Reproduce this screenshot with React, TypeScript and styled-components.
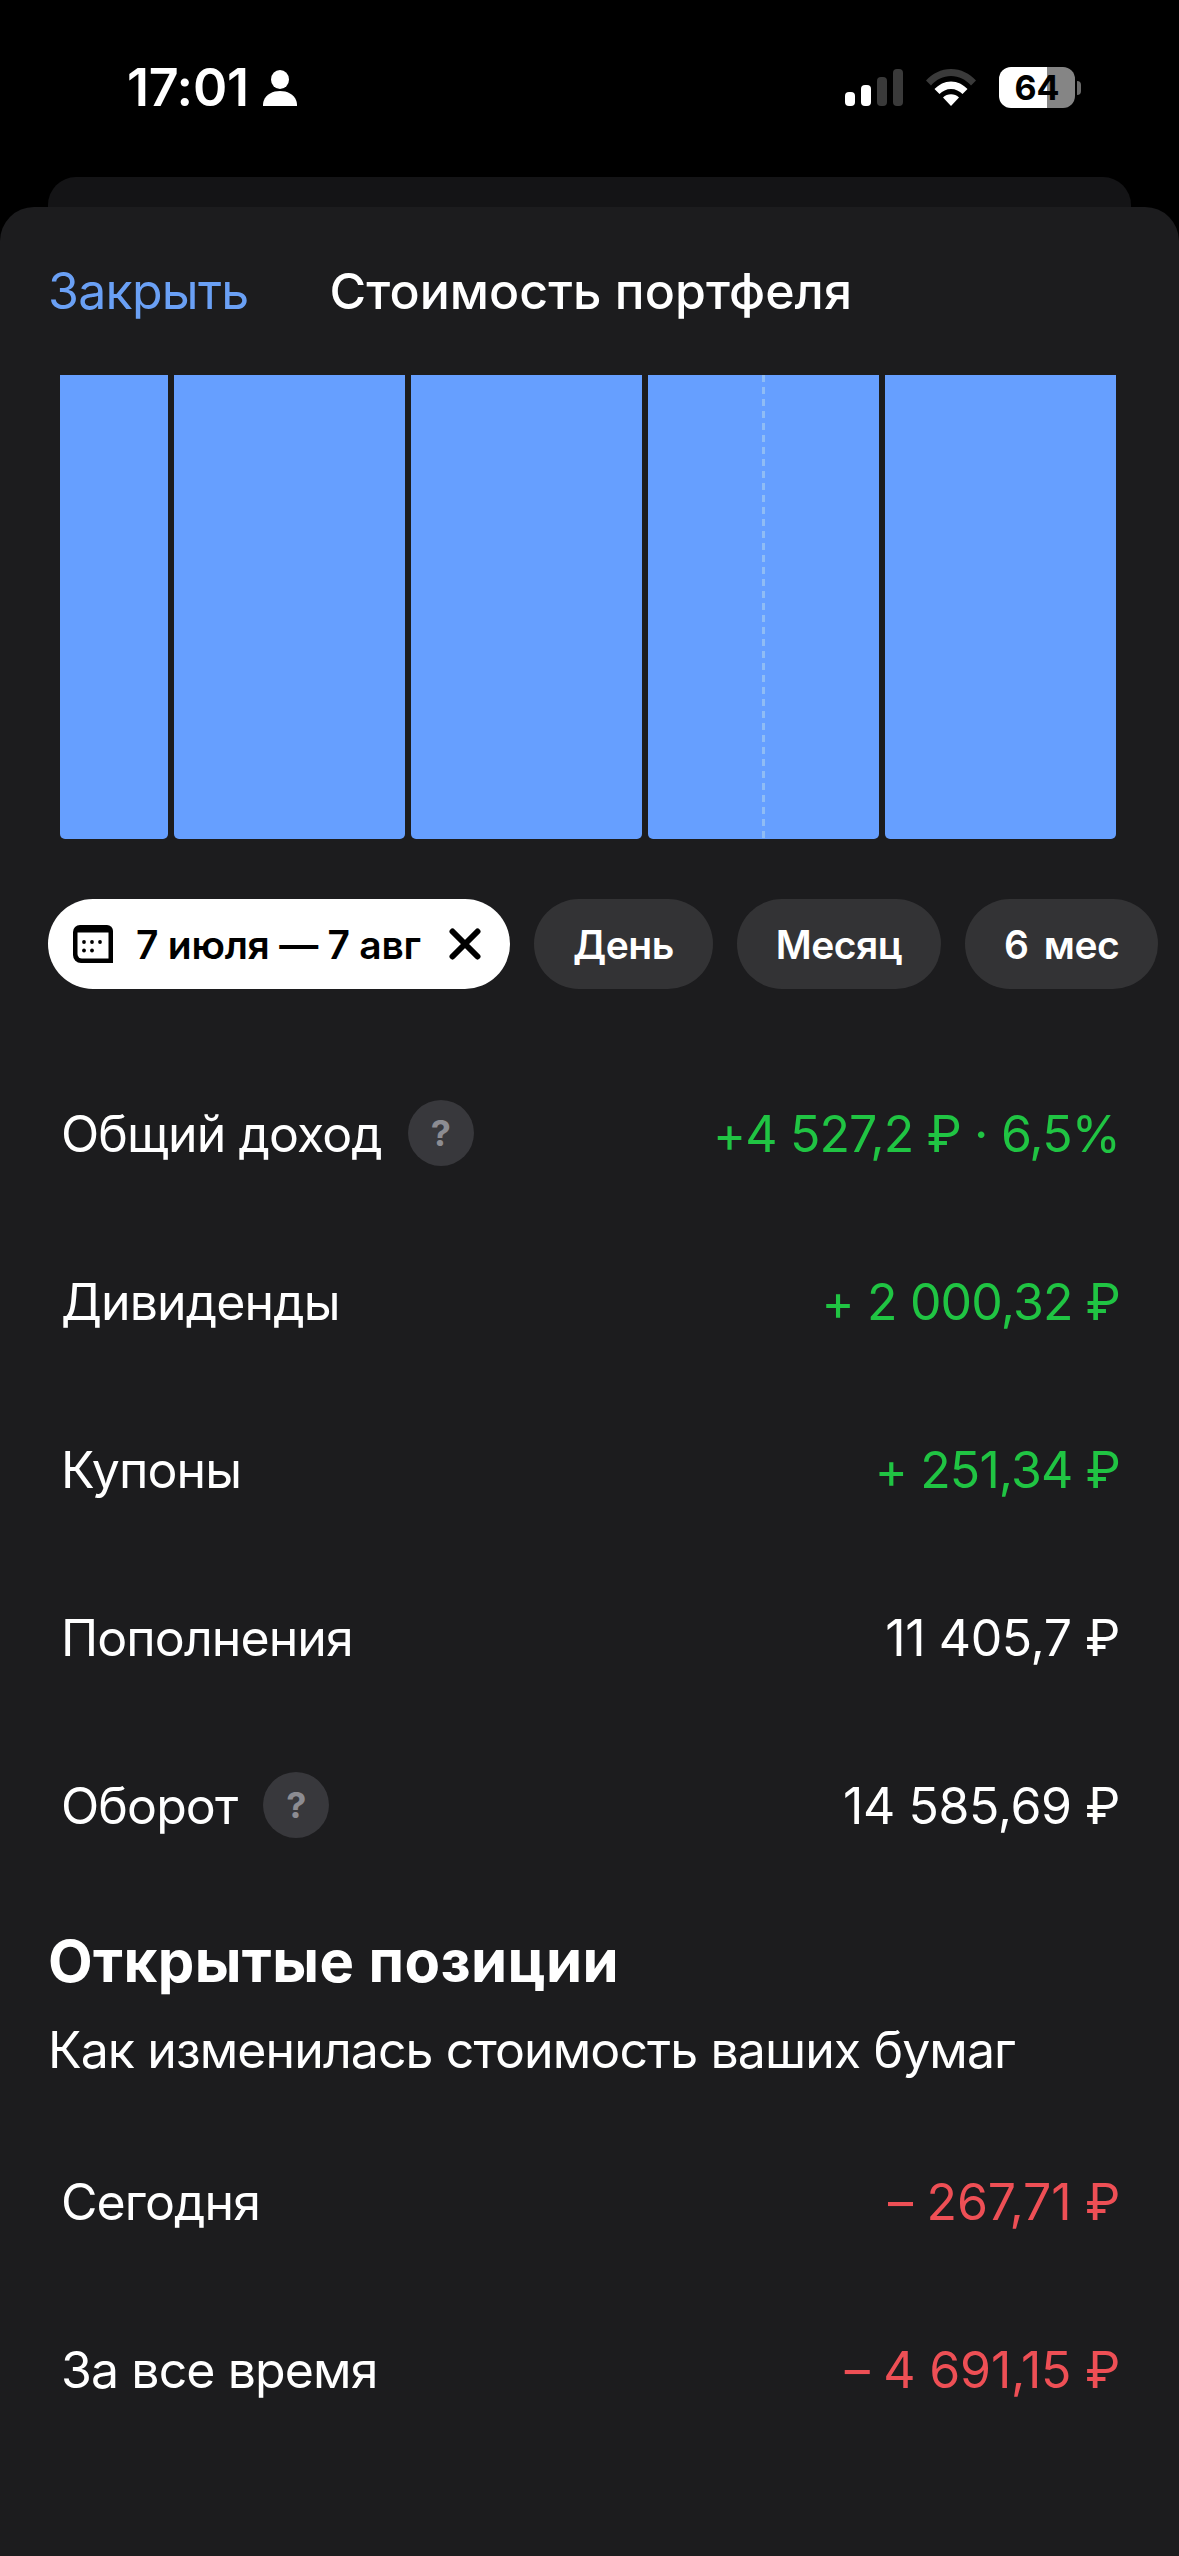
import styled, { createGlobalStyle } from 'styled-components';

const GlobalStyle = createGlobalStyle`
  html, body {
    margin: 0;
    padding: 0;
    background: #000000;
  }
  body {
    font-family: Inter, "Noto Sans", sans-serif;
    -webkit-font-smoothing: antialiased;
  }
`;

const incomeRows = [
  { label: 'Общий доход', value: '+4 527,2 ₽ · 6,5%', tone: 'up', help: true },
  { label: 'Дивиденды', value: '+ 2 000,32 ₽', tone: 'up' },
  { label: 'Купоны', value: '+ 251,34 ₽', tone: 'up' },
  { label: 'Пополнения', value: '11 405,7 ₽', tone: 'plain' },
  { label: 'Оборот', value: '14 585,69 ₽', tone: 'plain', help: true },
];

const positionRows = [
  { label: 'Сегодня', value: '– 267,71 ₽', tone: 'down' },
  { label: 'За все время', value: '– 4 691,15 ₽', tone: 'down' },
];

const periods = ['День', 'Месяц', '6 мес'];

const tones: { [key: string]: { color: string; spacing: number } } = {
  up: { color: '#20c443', spacing: -0.85 },
  down: { color: '#ee4f55', spacing: -0.2 },
  plain: { color: '#ffffff', spacing: -0.4 },
};

const Row = ({ label, value, tone, help }: { label: string; value: string; tone: string; help?: boolean }) => (
  <RowWrapper>
    <RowLabel>
      {label}
      {help && <HelpBadge>?</HelpBadge>}
    </RowLabel>
    <RowValue $color={tones[tone].color} $spacing={tones[tone].spacing}>{value}</RowValue>
  </RowWrapper>
);

const App = () => {
  return (
    <>
      <GlobalStyle />
      <Page>
        <StatusBar>
          <TimeGroup>
            <Time>17:01</Time>
            <svg width="34" height="36" viewBox="0 0 34 36">
              <ellipse cx="17" cy="9.5" rx="9" ry="9.5" fill="#fff" />
              <path d="M0 36c0-1 0-3 .6-5C3 24 10 21 17 21s14 3 16.400 10c.6 2 .6 4 .6 5z" fill="#fff" />
            </svg>
          </TimeGroup>
          <StatusIcons>
            <svg width="58" height="37" viewBox="0 0 58 37">
              <rect x="0" y="23" width="10" height="14" rx="4" fill="#fff" />
              <rect x="16" y="16" width="10" height="21" rx="4" fill="#fff" />
              <rect x="32" y="8" width="10" height="29" rx="4" fill="#3a3a3a" />
              <rect x="48" y="0" width="10" height="37" rx="4" fill="#3a3a3a" />
            </svg>
            <svg width="50" height="37" viewBox="0 0 50 37">
              <path d="M0 11.500C6.500 4.500 15 0 25 0s18.500 4.500 25 11.500l-5 5C39.500 10.500 33 7 25 7S10.500 10.500 5 16.500z" fill="#3a3a3a" />
              <path d="M8.500 20C13 15.500 18.500 12.500 25 12.500S37 15.500 41.500 20l-5 5C33.500 22 29.500 20 25 20s-8.500 2-11.500 5z" fill="#fff" />
              <path d="M17 28.500c2.200-2 5-3.200 8-3.200s5.800 1.200 8 3.200L25 37z" fill="#fff" />
            </svg>
            <Battery>
              <BatteryBody>64</BatteryBody>
              <BatteryCap />
            </Battery>
          </StatusIcons>
        </StatusBar>
        <BackSheet />
        <Sheet>
          <Header>
            <CloseLink>Закрыть</CloseLink>
            <Title>Стоимость портфеля</Title>
          </Header>
          <Chart>
            <Bar $grow={108} />
            <Bar $grow={231} />
            <Bar $grow={231} />
            <Bar $grow={231}>
              <DashedLine />
            </Bar>
            <Bar $grow={231} />
          </Chart>
          <ChipRow>
            <DateChip>
              <svg width="40" height="38" viewBox="0 0 40 38">
                <path d="M7 0h27a6 6 0 0 1 6 6v32H8a8 8 0 0 1-8-8V7a7 7 0 0 1 7-7z" fill="#000" />
                <path d="M4.500 7.500h31v26H9a4.500 4.500 0 0 1-4.500-4.500z" fill="#fff" />
                <circle cx="11" cy="17" r="1.900" fill="#000" />
                <circle cx="19" cy="17" r="1.900" fill="#000" />
                <circle cx="27" cy="17" r="1.900" fill="#000" />
                <circle cx="11" cy="25.500" r="1.900" fill="#000" />
                <circle cx="19" cy="25.500" r="1.900" fill="#000" />
              </svg>
              <DateText>7 июля — 7 авг</DateText>
              <CloseIcon width="32" height="32" viewBox="0 0 32 32">
                <path d="M3.500 3.500l25 25M28.500 3.500l-25 25" stroke="#000" strokeWidth="6" strokeLinecap="round" />
              </CloseIcon>
            </DateChip>
            {periods.map((period) => (
              <PeriodChip key={period}>{period}</PeriodChip>
            ))}
          </ChipRow>
          <RowList>
            {incomeRows.map((row) => (
              <Row key={row.label} {...row} />
            ))}
          </RowList>
          <SectionTitle>Открытые позиции</SectionTitle>
          <SectionText>Как изменилась стоимость ваших бумаг</SectionText>
          <PositionList>
            {positionRows.map((row) => (
              <Row key={row.label} {...row} />
            ))}
          </PositionList>
        </Sheet>
      </Page>
    </>
  );
};

export default App;

const Page = styled.div`
  width: 1179px;
  height: 2556px;
  overflow: hidden;
  display: flex;
  flex-direction: column;
  background: #000000;
  color: #ffffff;
`;

const StatusBar = styled.div`
  height: 177px;
  flex-shrink: 0;
  box-sizing: border-box;
  padding: 67px 98px 0 127px;
  display: flex;
  justify-content: space-between;
  align-items: flex-start;
`;

const TimeGroup = styled.div`
  display: flex;
  align-items: center;
  gap: 14px;
  height: 41px;
`;

const Time = styled.div`
  font-size: 52px;
  font-weight: 600;
  letter-spacing: -0.3px;
  line-height: 41px;
`;

const StatusIcons = styled.div`
  display: flex;
  align-items: center;
  height: 41px;
  gap: 23px;
  margin-left: auto;
`;

const Battery = styled.div`
  display: flex;
  align-items: center;
  gap: 2px;
`;

const BatteryBody = styled.div`
  width: 76px;
  height: 41px;
  border-radius: 12px;
  background: linear-gradient(90deg, #ffffff 0 63%, #858585 63% 100%);
  color: #000000;
  font-size: 34px;
  font-weight: 700;
  line-height: 41px;
  text-align: center;
`;

const BatteryCap = styled.div`
  width: 4px;
  height: 14px;
  border-radius: 0 7px 7px 0;
  background: #6a6a6a;
`;

const BackSheet = styled.div`
  height: 30px;
  flex-shrink: 0;
  margin: 0 48px;
  border-radius: 28px 28px 0 0;
  background: #141416;
`;

const Sheet = styled.div`
  flex: 1;
  border-radius: 34px 34px 0 0;
  background: #1c1c1e;
  display: flex;
  flex-direction: column;
`;

const Header = styled.div`
  height: 168px;
  flex-shrink: 0;
  box-sizing: border-box;
  padding: 0 0 0 48px;
  display: flex;
  align-items: center;
  gap: 81px;
`;

const CloseLink = styled.div`
  color: #6aa0f5;
  font-size: 50px;
  letter-spacing: -0.7px;
`;

const Title = styled.div`
  font-size: 50px;
  font-weight: 500;
  letter-spacing: 0.05px;
`;

const Chart = styled.div`
  height: 464px;
  flex-shrink: 0;
  margin: 0 63px 0 60px;
  display: flex;
  gap: 6px;
`;

const Bar = styled.div<{ $grow: number }>`
  flex: ${(props) => props.$grow} 1 0;
  position: relative;
  background: #669fff;
  border-radius: 0 0 5px 5px;
`;

const DashedLine = styled.div`
  position: absolute;
  top: 0;
  bottom: 0;
  left: 50%;
  margin-left: -2px;
  width: 3px;
  background: repeating-linear-gradient(180deg, #8fbcf5 0 7px, transparent 7px 12px);
`;

const ChipRow = styled.div`
  margin: 60px 0 0 48px;
  display: flex;
  gap: 24px;
  height: 90px;
  flex-shrink: 0;
`;

const DateChip = styled.div`
  width: 462px;
  box-sizing: border-box;
  padding: 0 29px 0 25px;
  border-radius: 45px;
  background: #ffffff;
  color: #000000;
  display: flex;
  align-items: center;
  gap: 23px;
`;

const CloseIcon = styled.svg`
  margin-left: auto;
`;

const DateText = styled.div`
  font-size: 39px;
  font-weight: 600;
  letter-spacing: -0.25px;
`;

const PeriodChip = styled.div`
  padding: 0 39px;
  border-radius: 45px;
  background: #333335;
  color: #ffffff;
  font-size: 39px;
  font-weight: 600;
  letter-spacing: -0.5px;
  word-spacing: 6px;
  display: flex;
  align-items: center;
`;

const RowList = styled.div`
  margin-top: 61px;
  display: flex;
  flex-direction: column;
`;

const PositionList = styled.div`
  margin-top: 35px;
  display: flex;
  flex-direction: column;
`;

const RowWrapper = styled.div`
  height: 168px;
  box-sizing: border-box;
  padding: 0 59px 0 61px;
  display: flex;
  align-items: center;
  justify-content: space-between;
`;

const RowLabel = styled.div`
  display: flex;
  align-items: center;
  gap: 26px;
  font-size: 50px;
  letter-spacing: -0.9px;
`;

const RowValue = styled.div<{ $color: string; $spacing: number }>`
  color: ${(props) => props.$color};
  font-size: 50px;
  letter-spacing: ${(props) => props.$spacing}px;
`;

const HelpBadge = styled.div`
  width: 66px;
  height: 66px;
  margin-top: -3px;
  border-radius: 50%;
  background: #38383c;
  color: #8c8c92;
  font-size: 36px;
  font-weight: 700;
  letter-spacing: 0;
  display: flex;
  align-items: center;
  justify-content: center;
`;

const SectionTitle = styled.div`
  margin: 35px 0 0 48px;
  font-size: 58px;
  font-weight: 700;
  letter-spacing: 0.4px;
  line-height: 72px;
`;

const SectionText = styled.div`
  margin: 20px 0 0 48px;
  font-size: 50px;
  letter-spacing: -0.9px;
  line-height: 66px;
`;
